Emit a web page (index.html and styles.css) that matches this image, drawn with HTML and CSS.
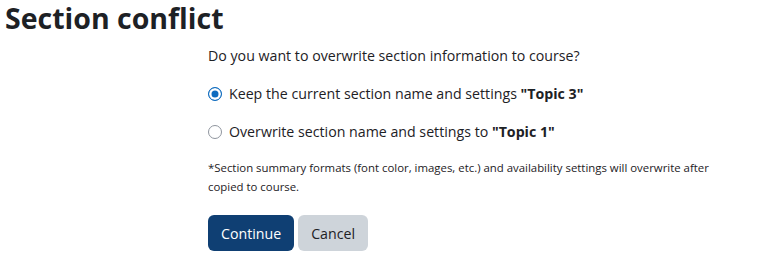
FILE: index.html
```html
<!DOCTYPE html>
<html lang="en">
<head>
    <meta charset="UTF-8">
    <meta name="viewport" content="width=device-width, initial-scale=1.0">
    <title>Section conflict</title>
    <link rel="stylesheet" href="styles.css">
</head>
<body>

    <h2 class="title">Section conflict</h2>

    <form class="conflict-form">
        <div class="form-col">
            <p class="question">Do you want to overwrite section information to course?</p>

            <label class="option">
                <input type="radio" name="mode" value="keep" checked>
                <span>Keep the current section name and settings <b>"Topic 3"</b></span>
            </label>

            <label class="option">
                <input type="radio" name="mode" value="overwrite">
                <span>Overwrite section name and settings to <b>"Topic 1"</b></span>
            </label>

            <p class="note">*Section summary formats (font color, images, etc.) and availability settings will overwrite after copied to course.</p>

            <div class="actions">
                <button type="button" class="btn btn-primary">Continue</button>
                <button type="button" class="btn btn-secondary">Cancel</button>
            </div>
        </div>
    </form>

</body>
</html>
```

FILE: styles.css
```css
body {
    font-family: "Open Sans", "Noto Sans", sans-serif;
    font-size: 14.2px;
    color: #1d2125;
    margin: 0;
    padding: 0 5px;
    background: #fff;
}
.title {
    font-size: 28.5px;
    font-weight: 700;
    line-height: 36px;
    margin: 0;
}
.conflict-form {
    display: grid;
    grid-template-columns: 203px 1fr;
}
.form-col {
    grid-column: 2;
    padding-top: 8px;
}
.question {
    margin: 0 0 14px;
    line-height: 24px;
}
.option {
    display: flex;
    align-items: center;
    gap: 7px;
    line-height: 24px;
    margin-bottom: 14px;
}
.option input {
    appearance: none;
    margin: 0;
    width: 14px;
    height: 14px;
    border: 1.5px solid #8f959e;
    border-radius: 50%;
    background: #fff;
}
.option input:checked {
    border-color: #0f6cbf;
    background: #0f6cbf;
    box-shadow: inset 0 0 0 2.5px #fff;
}
.note {
    font-size: 11.4px;
    line-height: 19px;
    margin: 0 0 19px;
    max-width: 520px;
}
.actions {
    display: flex;
    gap: 4px;
}
.btn {
    font-family: inherit;
    font-size: 14.2px;
    border: none;
    border-radius: 6px;
    height: 36px;
    padding: 0 13px;
    cursor: pointer;
}
.btn-primary {
    background-color: #0f3f73;
    color: #fff;
}
.btn-secondary {
    background-color: #ced4da;
    color: #1d2125;
}
```
